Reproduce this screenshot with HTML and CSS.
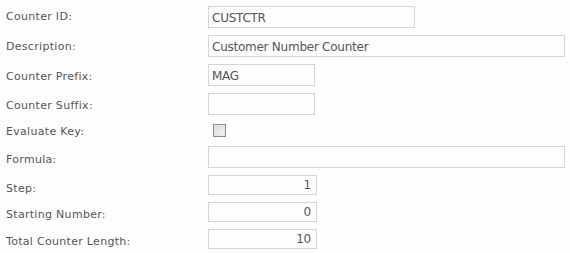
FILE: index.html
```html
<!DOCTYPE html>
<html lang="en">
<head>
	<meta charset="UTF-8">
	<title>Counter</title>
	<link rel="stylesheet" href="styles.css">
</head>
<body>
	<form class="counter-form">
		<div class="row first">
			<label class="lbl">Counter ID:</label>
			<input class="txt mid" type="text" value="CUSTCTR">
		</div>
		<div class="row second">
			<label class="lbl">Description:</label>
			<input class="txt wide" type="text" value="Customer Number Counter">
		</div>
		<div class="row">
			<label class="lbl">Counter Prefix:</label>
			<input class="txt short" type="text" value="MAG">
		</div>
		<div class="row">
			<label class="lbl">Counter Suffix:</label>
			<input class="txt short" type="text" value="">
		</div>
		<div class="row chk-row">
			<label class="lbl">Evaluate Key:</label>
			<span class="chk"></span>
		</div>
		<div class="row low">
			<label class="lbl">Formula:</label>
			<input class="txt wide" type="text" value="">
		</div>
		<div class="row small low">
			<label class="lbl">Step:</label>
			<input class="txt num" type="text" value="1">
		</div>
		<div class="row small">
			<label class="lbl">Starting Number:</label>
			<input class="txt num" type="text" value="0">
		</div>
		<div class="row small">
			<label class="lbl">Total Counter Length:</label>
			<input class="txt num" type="text" value="10">
		</div>
	</form>
</body>
</html>
```

FILE: styles.css
```css
*{
	margin: 0;
	padding: 0;
	box-sizing: border-box;
}
body{
	background: #fefdfe;
	font-family: "DejaVu Sans", sans-serif;
	color: #555;
}
.counter-form{
	padding: 6px 0 0 6px;
}
.row{
	display: grid;
	grid-template-columns: 202px 1fr;
	align-items: start;
	height: 29px;
}
.row.small{
	height: 27px;
}
.row.chk-row{
	height: 24px;
}
.lbl{
	font-size: 11px;
	letter-spacing: 0.3px;
	color: #555;
	padding-top: 6px;
}
.first .lbl{ padding-top: 4px; }
.second .lbl{ padding-top: 5px; }
.chk-row .lbl{ padding-top: 3px; }
.low .lbl{ padding-top: 7px; }
.txt{
	height: 22px;
	border: 1px solid #d6d4d6;
	background: #fefdfe;
	font-family: "DejaVu Sans", sans-serif;
	font-size: 12px;
	letter-spacing: -0.25px;
	color: #555;
	padding: 1px 3px 0;
	outline: none;
}
.mid{ width: 207px; }
.wide{ width: 357px; }
.short{ width: 107px; }
.num{
	width: 109px;
	height: 20px;
	text-align: right;
	padding: 0 5px 0 3px;
}
.chk{
	display: block;
	width: 13px;
	height: 13px;
	margin: 2px 0 0 5px;
	border: 1px solid #8d8b8d;
	box-shadow: inset 0 0 0 1px #e8e6e8;
	background: linear-gradient(135deg, #d6d4d6, #f8f7f8);
}
```
